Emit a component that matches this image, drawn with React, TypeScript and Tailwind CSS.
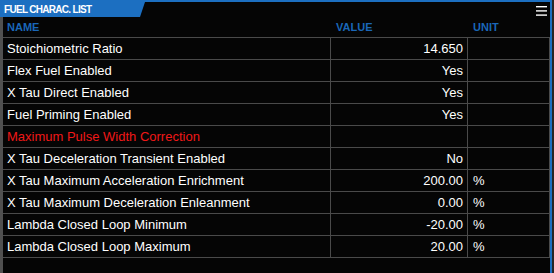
import React from 'react';

type Row = { name: string; value: string; unit: string; alert?: boolean };

const rows: Row[] = [
  { name: 'Stoichiometric Ratio', value: '14.650', unit: '' },
  { name: 'Flex Fuel Enabled', value: 'Yes', unit: '' },
  { name: 'X Tau Direct Enabled', value: 'Yes', unit: '' },
  { name: 'Fuel Priming Enabled', value: 'Yes', unit: '' },
  { name: 'Maximum Pulse Width Correction', value: '', unit: '', alert: true },
  { name: 'X Tau Deceleration Transient Enabled', value: 'No', unit: '' },
  { name: 'X Tau Maximum Acceleration Enrichment', value: '200.00', unit: '%' },
  { name: 'X Tau Maximum Deceleration Enleanment', value: '0.00', unit: '%' },
  { name: 'Lambda Closed Loop Minimum', value: '-20.00', unit: '%' },
  { name: 'Lambda Closed Loop Maximum', value: '20.00', unit: '%' },
];

export default function App() {
  return (
    <div className="w-[554px] h-[273px] bg-[#050505] flex overflow-hidden font-['Liberation_Sans',Arial,sans-serif]">
      {/* main column */}
      <div className="flex-1 flex flex-col">
        <div className="h-[2px] bg-[#1c6fc1]" />
        {/* title strip */}
        <div className="h-[15px] flex items-center justify-between relative">
          <div className="h-full w-[145px] bg-[#1c6fc1] [clip-path:polygon(0_0,145px_0,140px_100%,0_100%)] flex items-center pl-[4px]">
            <span className="text-white font-bold text-[10px] tracking-[-0.7px] leading-none">FUEL CHARAC. LIST</span>
          </div>
          <svg width="11" height="11" viewBox="0 0 11 11" className="mr-[3px] mt-[1px]">
            <rect x="0" y="1" width="11" height="1.4" fill="#fff" />
            <rect x="0" y="5.2" width="11" height="1.4" fill="#fff" />
            <rect x="0" y="9.4" width="11" height="1.4" fill="#fff" />
          </svg>
        </div>
        <div className="flex-1 flex">
          <div className="w-[3px] bg-[#505050]" />
          <div className="flex-1 flex flex-col">
            {/* header */}
            <div className="h-[21px] flex items-center pt-[1px] border-b border-[#4a4a4a] text-[11px] font-bold text-[#1a67b8]">
              <div className="w-[328px] pl-[4px]">NAME</div>
              <div className="w-[137px] pl-[5px]">VALUE</div>
              <div className="w-[82px] pl-[5px]">UNIT</div>
            </div>
            {rows.map((r) => (
              <div key={r.name} className="h-[22px] flex border-b border-[#4a4a4a] text-[13px] text-white">
                <div className={`w-[328px] border-r border-[#4a4a4a] pl-[4px] flex items-center ${r.alert ? 'text-[#f01818]' : ''}`}>
                  {r.name}
                </div>
                <div className="w-[137px] border-r border-[#4a4a4a] pr-[4px] flex items-center justify-end">
                  {r.value}
                </div>
                <div className="w-[82px] border-r border-[#4a4a4a] pl-[5px] flex items-center">
                  {r.unit}
                </div>
              </div>
            ))}
          </div>
        </div>
      </div>
      {/* right border */}
      <div className="w-[2px] bg-[#1c6fc1]" />
      <div className="w-[2px] bg-[#262626]" />
    </div>
  );
}
